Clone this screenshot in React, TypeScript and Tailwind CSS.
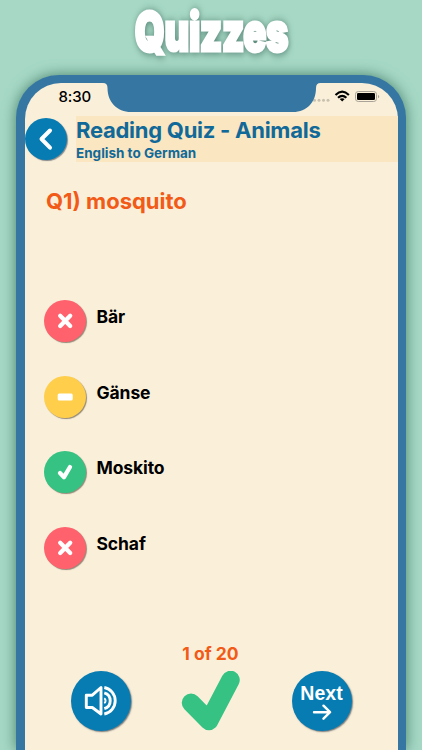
import React from 'react';

type AnswerState = 'wrong' | 'neutral' | 'correct';

interface Answer {
    label: string;
    state: AnswerState;
}

const answers: Answer[] = [
    { label: 'Bär', state: 'wrong' },
    { label: 'Gänse', state: 'neutral' },
    { label: 'Moskito', state: 'correct' },
    { label: 'Schaf', state: 'wrong' },
];

const stateColors: Record<AnswerState, string> = {
    wrong: 'bg-[#ff616d]',
    neutral: 'bg-[#ffcf4b]',
    correct: 'bg-[#35c283]',
};

const AnswerIcon: React.FC<{ state: AnswerState }> = ({ state }) => (
    <svg viewBox="0 0 42 42" className="size-full" fill="none" stroke="white" strokeWidth="4.3" strokeLinecap="round" strokeLinejoin="round">
        {state === 'wrong' && <path d="M16.200 15.700 26.200 25.900M26.200 15.700 16.200 25.900" />}
        {state === 'neutral' && <rect x="13.700" y="17.500" width="15" height="7" rx="1.500" fill="white" stroke="none" />}
        {state === 'correct' && <path d="M16 22 20 26.200 26 16" />}
    </svg>
);

const StatusBar: React.FC = () => (
    <div className="relative h-[33px] shrink-0">
        <span className="absolute left-[34px] top-[4px] text-[15px] leading-5 font-medium tracking-[-0.1px] text-black">8:30</span>
        <svg className="absolute left-0 top-0" width="374" height="33" viewBox="0 0 374 33" fill="none">
            <g fill="#c9c0b0">
                <circle cx="289.500" cy="17.300" r="1.500" />
                <circle cx="294" cy="17.300" r="1.500" />
                <circle cx="298.500" cy="17.300" r="1.500" />
                <circle cx="303" cy="17.300" r="1.500" />
            </g>
            <path d="M78 -1V0Q82.500 0 82.500 5C82.500 19 92 29 106 29H268C282 29 291 19 291 5Q291 0 295.500 0V-1Z" fill="#3676a3" />
            <g stroke="black" strokeWidth="2.100">
                <path d="M310.500 12Q317.200 5.400 323.900 12" />
                <path d="M313 14.800Q317.200 10.800 321.400 14.800" />
            </g>
            <path d="M317.200 18.500 314.700 16.100Q317.200 14.300 319.700 16.100Z" fill="black" />
            <rect x="330.500" y="8.500" width="21" height="10" rx="2.800" stroke="#aaa397" />
            <rect x="332" y="10" width="18" height="7" rx="1.300" fill="black" />
            <path d="M353 11.700Q355.500 13.500 353 15.300Z" fill="#aaa397" />
        </svg>
    </div>
);

const QuizHeader: React.FC = () => (
    <header className="flex h-[46px] shrink-0">
        <button className="mt-[1.500px] ml-[0.500px] size-[42px] shrink-0 rounded-full bg-[#067cb3] shadow-[1px_1px_1px_#888]">
            <svg viewBox="0 0 42 42" fill="none" stroke="white" strokeWidth="4" strokeLinecap="round" strokeLinejoin="round">
                <path d="M25 12.500 16.500 21 25 29.700" />
            </svg>
        </button>
        <div className="ml-[9px] flex-1 bg-[#fae6c0] text-[#116999] whitespace-nowrap">
            <h2 className="text-[22px] leading-[28px] font-bold tracking-[-0.260px]">Reading Quiz - Animals</h2>
            <p className="text-[13.500px] leading-[18px] font-bold">English to German</p>
        </div>
    </header>
);

const QuizFooter: React.FC = () => (
    <footer className="grid grid-cols-[60px_1fr_60px] px-[46px]">
        <button className="size-[60px] rounded-full bg-[#067cb3] shadow-[1px_1px_1.500px_#777]">
            <svg viewBox="0 0 60 60" fill="none" stroke="white" strokeWidth="2.900" strokeLinejoin="round">
                <path d="M15.300 24.200H21.300L30 16.500V43L21.300 36.500H15.300Z" />
                <path d="M33.300 16.500A13.500 13.500 0 0 1 33.300 43" />
                <path d="M33.300 21.800A8.300 8.300 0 0 1 33.300 37.700" />
                <path d="M33.300 27.300A3 3 0 0 1 33.300 32.200" strokeWidth="2" />
            </svg>
        </button>
        <svg className="justify-self-center" width="62" height="60" viewBox="0 0 62 60" fill="none" stroke="#35c283" strokeWidth="18.500" strokeLinecap="round" strokeLinejoin="round">
            <path d="M11 31.800 29 50 50.500 9" />
        </svg>
        <button className="flex size-[60px] flex-col items-center rounded-full bg-[#067cb3] text-white shadow-[1px_1px_1.500px_#777]">
            <span className="mt-[11px] font-['Liberation_Sans',sans-serif] text-[19.500px] leading-[22px] font-bold">Next</span>
            <svg width="20" height="16" viewBox="0 0 20 16" fill="none" stroke="white" strokeWidth="2.400" strokeLinecap="round" strokeLinejoin="round">
                <path d="M2 8.200H18M11.500 1.700 18 8.200 11.500 14.700" />
            </svg>
        </button>
    </footer>
);

const App: React.FC = () => {
    return (
        <div className="flex h-[750px] w-[422px] flex-col items-center bg-[#a6d8c5] font-[Inter,sans-serif]">
            <h1 className="flex h-[75px] w-full shrink-0 justify-center text-[53px] leading-[64px] font-black text-white">
                <span className="inline-block scale-x-[.72] tracking-[-0.5px] [-webkit-text-stroke:3px_white] [filter:drop-shadow(1px_1px_4px_#345f52b0)]">Quizzes</span>
            </h1>
            <div className="min-h-0 w-[390px] flex-1 rounded-t-[43px] bg-[#3676a3] px-[8.500px] pt-[8px] shadow-[0_0_14px_#47806c]">
                <main className="flex h-full flex-col rounded-t-[36px] bg-[#faf0da]">
                    <StatusBar />
                    <QuizHeader />
                    <h3 className="mt-[24px] h-[30px] pl-[21.500px] text-[22px] leading-[30px] font-bold whitespace-nowrap text-[#f25a18]">Q1) mosquito</h3>
                    <ul className="mt-[84px] flex flex-col gap-[33.500px] pl-[19px]">
                        {answers.map((answer) => (
                            <li key={answer.label} className="flex h-[42px] gap-[11px]">
                                <div className={`size-[42px] rounded-full shadow-[1px_1px_1px_#948977] ${stateColors[answer.state]}`}>
                                    <AnswerIcon state={answer.state} />
                                </div>
                                <span className="mt-[5px] text-[17.500px] leading-6 font-bold tracking-[-0.100px] text-black">{answer.label}</span>
                            </li>
                        ))}
                    </ul>
                    <p className="mt-[73.500px] mb-[5px] pr-[1px] text-center text-[17.500px] leading-[24px] font-bold text-[#f25a18]">1 of 20</p>
                    <QuizFooter />
                </main>
            </div>
        </div>
    );
};

export default App;
